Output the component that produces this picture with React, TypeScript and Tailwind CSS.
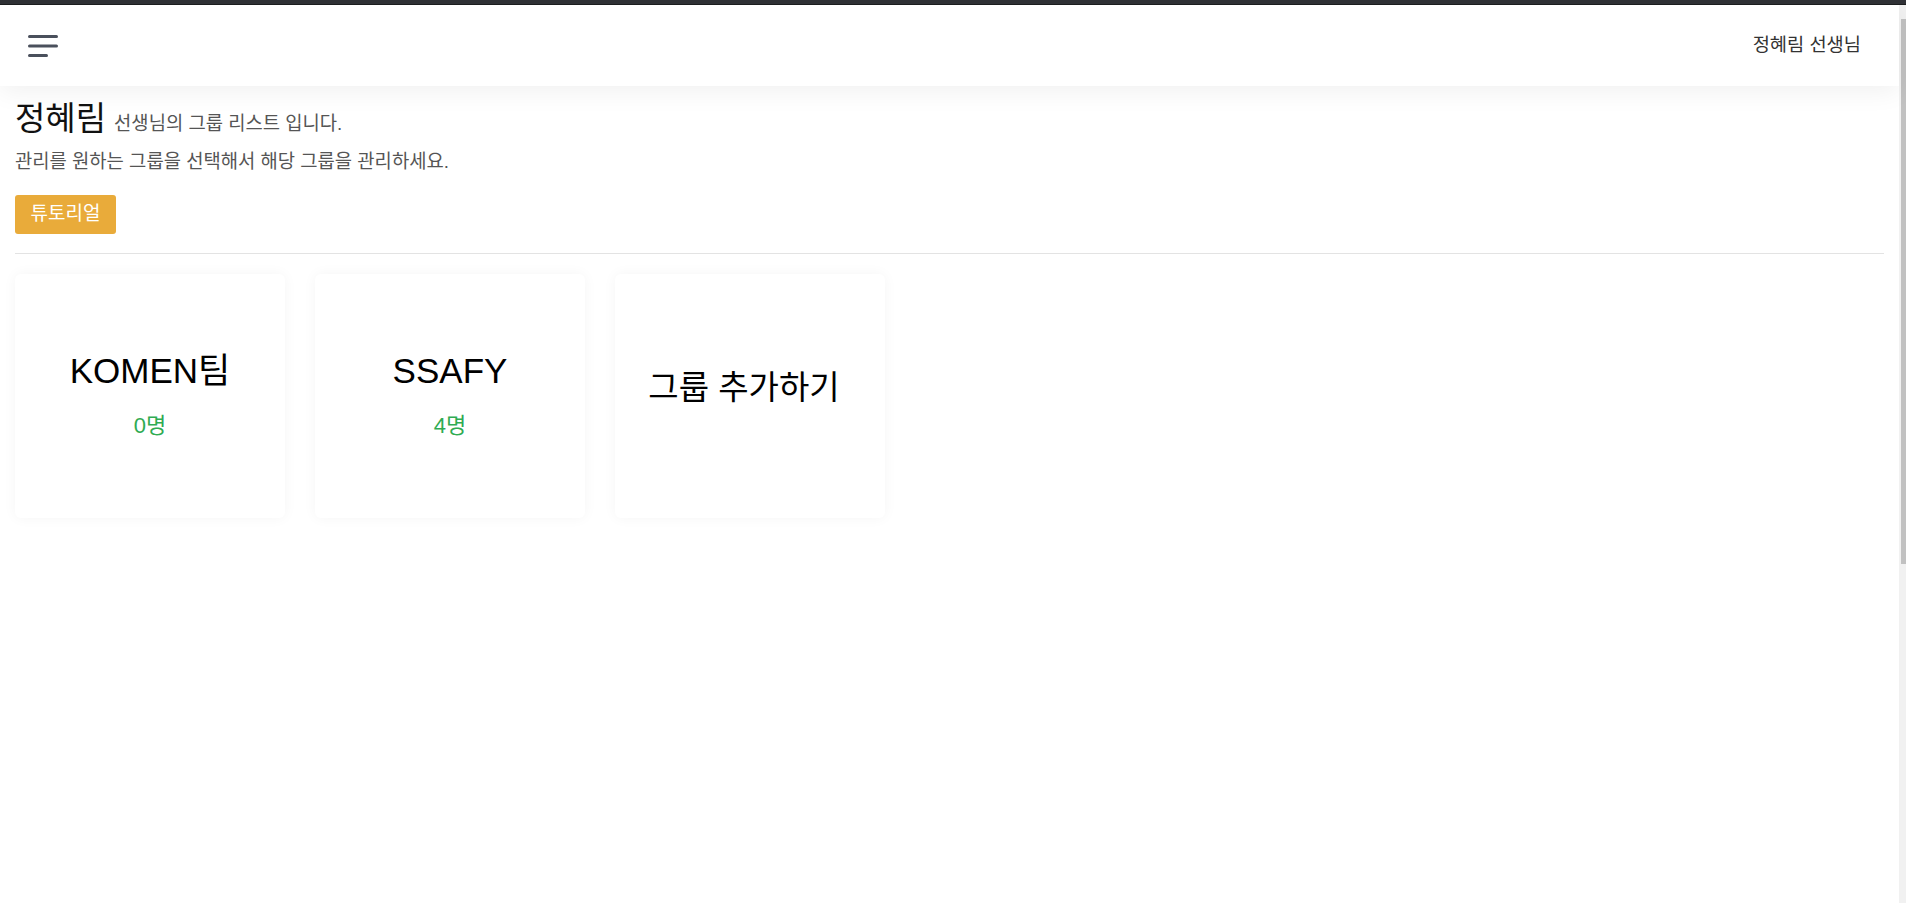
import * as React from "react";

type Group = {
  name: string;
  count?: number;
};

const groups: Group[] = [
  { name: "KOMEN팀", count: 0 },
  { name: "SSAFY", count: 4 },
];

function MenuIcon() {
  return (
    <svg width="31" height="24" viewBox="0 0 31 24" fill="none">
      <rect x="0" y="1" width="30" height="3" rx="1.5" fill="#4a505c" />
      <rect x="0" y="10.5" width="30" height="3" rx="1.5" fill="#4a505c" />
      <rect x="0" y="20" width="20" height="3" rx="1.5" fill="#4a505c" />
    </svg>
  );
}

function GroupCard({ name, count }: Group) {
  const isAdd = count === undefined;
  return (
    <div className="flex h-[244px] w-[270px] cursor-pointer flex-col items-center justify-center rounded-[6px] bg-white shadow-[0_0_14px_rgba(0,0,0,0.045)]">
      <span
        className={
          isAdd
            ? "mb-[16px] pr-[12px] text-[33px] leading-[1.2] text-black"
            : "text-[35px] leading-[1.2] text-black"
        }
      >
        {name}
      </span>
      {!isAdd && (
        <span className="mt-[17px] text-[22px] leading-[1.5] text-[#2fab52]">
          {count}명
        </span>
      )}
    </div>
  );
}

export default function App() {
  return (
    <div
      className="flex h-screen flex-col overflow-hidden bg-white"
      style={{ fontFamily: '"Liberation Sans", Arial, "Noto Sans CJK KR", sans-serif' }}
    >
      {/* window top strip */}
      <div className="h-[5px] shrink-0 border-b border-[#1c1e1f] bg-[#303236]" />

      <div className="flex min-h-0 flex-1">
        <div className="flex min-w-0 flex-1 flex-col">
          {/* --- Header --- */}
          <header className="relative z-10 flex h-[81px] shrink-0 items-center justify-between bg-white pl-[28px] pr-[38px] shadow-[0_6px_24px_rgba(0,0,0,0.06)]">
            <button className="flex items-center">
              <MenuIcon />
            </button>
            <span className="text-[18.7px] text-[#333]">정혜림 선생님</span>
          </header>

          {/* --- Body --- */}
          <main className="px-[15px] pt-[13px]">
            <div className="flex items-baseline gap-[8px]">
              <span className="text-[33px] leading-[1.2] text-[#111]">정혜림</span>
              <span className="text-[18.8px] text-[#555]">선생님의 그룹 리스트 입니다.</span>
            </div>
            <p className="mt-[9px] text-[18.8px] leading-[1.5] text-[#555]">
              관리를 원하는 그룹을 선택해서 해당 그룹을 관리하세요.
            </p>
            <button className="mt-[19px] flex h-[39px] w-[101px] items-center justify-center rounded-[3px] bg-[#e9ab3a] text-[19px] text-white">
              튜토리얼
            </button>
            <hr className="mt-[19px] border-t border-[#e3e3e3]" />

            <div className="mt-[20px] flex gap-[30px]">
              {groups.map((g) => (
                <GroupCard key={g.name} {...g} />
              ))}
              <GroupCard name="그룹 추가하기" />
            </div>
          </main>
        </div>

        {/* scrollbar */}
        <div className="flex w-[7px] shrink-0 bg-[#f1f1f1] pl-[2px] pt-[14px]">
          <div className="h-[545px] w-full bg-[#c1c1c1]" />
        </div>
      </div>
    </div>
  );
}
